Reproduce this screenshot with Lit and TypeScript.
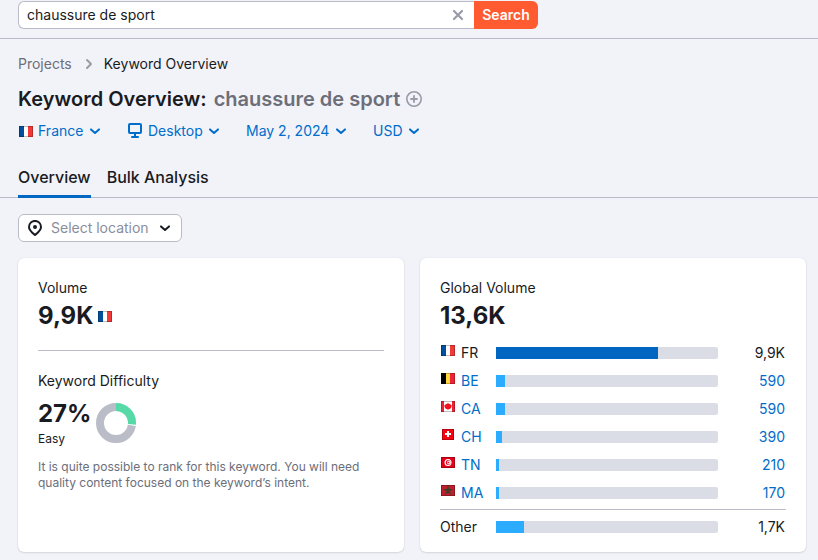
import { LitElement, html, svg, css } from "lit";
import { customElement, property } from "lit/decorators.js";
import { classMap } from "lit/directives/class-map.js";
import { styleMap } from "lit/directives/style-map.js";

interface Row {
  code: string;
  volume: string;
  share: number;
  current?: boolean;
}

const ROWS: Row[] = [
  { code: "FR", volume: "9,9K", share: 73, current: true },
  { code: "BE", volume: "590", share: 4 },
  { code: "CA", volume: "590", share: 4 },
  { code: "CH", volume: "390", share: 2.7 },
  { code: "TN", volume: "210", share: 1.4 },
  { code: "MA", volume: "170", share: 1.4 },
];

const stripes = (a: string, b: string, c: string) => svg`
  <rect width="5" height="11" fill=${a} /><rect x="5" width="4" height="11" fill=${b} />
  <rect x="9" width="5" height="11" fill=${c} />`;

const FLAGS: Record<string, unknown> = {
  FR: stripes("#00509d", "#ffffff", "#f13a37"),
  BE: stripes("#000000", "#ffd93f", "#ee2436"),
  CA: svg`<rect width="14" height="11" fill="#fff" /><rect width="3" height="11" fill="#ee2436" />
    <rect x="11" width="3" height="11" fill="#ee2436" />
    <path d="M7 1.800L8 3H9.500V4H10.500V6L9 8H7.500V9H6.500V8H5L3.500 6V4H4.500V3H6z" fill="#f5121c" />`,
  CH: svg`<rect x="1" width="12" height="11" fill="#f70212" />
    <path d="M6 2h2v2h2v2H8v2H6V6H4V4h2z" fill="#fff" />`,
  TN: svg`<rect width="14" height="11" fill="#e2001a" /><circle cx="7" cy="5.500" r="3.500" fill="#fff" />
    <circle cx="7.300" cy="5.500" r="2.500" fill="#e2001a" /><circle cx="8" cy="5.500" r="1.900" fill="#fff" />
    <path d="M6.200 5.500l2.600-.9-1.600 2.200V4.200l1.600 2.200z" fill="#e2001a" />`,
  MA: svg`<rect width="14" height="11" fill="#bd1f2c" />
    <path d="M7 2.300L8.900 8.100 4 4.500h6L5.100 8.100z" fill="none" stroke="#39402a" stroke-width="1.200" />`,
};

@customElement("country-flag")
class CountryFlag extends LitElement {
  @property() code = "FR";
  static styles = css`
    :host { display: inline-flex; flex: none; }
  `;
  render() {
    const square = this.code === "CH";
    return html`<svg width="14" height="11" viewBox="0 0 14 11" aria-hidden="true">
      ${FLAGS[this.code]}
      <rect x=${square ? 1.5 : 0.5} y="0.5" width=${square ? 11 : 13} height="10" fill="none" stroke="#000" stroke-opacity=".25" />
    </svg>`;
  }
}

const chevron = html`<svg class="chevron" width="16" height="16" viewBox="0 0 16 16" aria-hidden="true">
  <path d="M4 6.400L8 10l4-3.600" fill="none" stroke="currentColor" stroke-width="2" stroke-linecap="round" stroke-linejoin="round" />
</svg>`;

@customElement("volume-bar")
class VolumeBar extends LitElement {
  @property({ type: Number }) share = 0;
  @property({ type: Boolean }) strong = false;
  static styles = css`
    :host { display: block; }
    .track { height: 12px; border-radius: 0 2px 2px 0; background: #dadde6; overflow: hidden; }
    .fill { height: 100%; background: #2bacff; }
    .strong { background: #0066c1; }
  `;
  render() {
    return html`<div class="track">
      <div class=${classMap({ fill: true, strong: this.strong })} style=${styleMap({ width: `${this.share}%` })}></div>
    </div>`;
  }
}

@customElement("app-root")
class AppRoot extends LitElement {
  static styles = css`
    :host {
      display: block;
      min-height: 100vh;
      box-sizing: border-box;
      background: #f2f3f8;
      color: #191b23;
      font: 14px/20px Inter, "Liberation Sans", sans-serif;
    }
    * { box-sizing: border-box; }
    a { color: #006dca; text-decoration: none; }
    button, input, select { font: inherit; margin: 0; }
    h1, h2, p { margin: 0; }

    .topbar { padding: 1px 18px 9px; border-bottom: 1px solid #b9bcc8; }
    .search { display: flex; max-width: 520px; height: 28px; }
    .field {
      flex: 1; display: flex; align-items: center; background: #fff;
      border: 1px solid #b9bcc8; border-right: 0; border-radius: 6px 0 0 6px; padding: 0 8px;
    }
    .query { flex: 1; min-width: 0; border: 0; padding: 0; background: none; color: inherit; outline: none; }
    .clear { display: flex; border: 0; padding: 0; background: none; color: #989ba8; }
    .go { width: 64px; border: 0; padding: 0; border-radius: 0 6px 6px 0; background: #ff5a30; color: #fff; font-weight: 600; }

    .crumbs { display: flex; align-items: center; gap: 8px; padding: 15px 18px 0; }
    .crumbs a { color: #6c6e79; }
    .crumbs svg { color: #989ba8; }

    .title { display: flex; align-items: center; gap: 7px; padding: 13px 18px 0; font-size: 20px; line-height: 24px; font-weight: 600; }
    .term { display: flex; align-items: center; gap: 6px; color: #6c6e79; }
    .add { display: flex; border: 0; padding: 0; background: none; color: #989ba8; }

    .filters { display: flex; gap: 24px; padding: 10px 18px 0; }
    .pick { position: relative; display: inline-flex; align-items: center; gap: 5px; color: #006dca; }
    .pick select {
      appearance: none; border: 0; padding: 0 19px 0 0; background: none; color: inherit; outline: none; height: 20px;
    }
    .pick .chevron { position: absolute; right: 0; pointer-events: none; }
    .pick country-flag { padding-left: 1px; }

    .tabs { display: flex; gap: 16px; padding: 24px 18px 0; border-bottom: 1px solid #b9bcc8; }
    .tab {
      border: 0; background: none; color: inherit; padding: 0; height: 33px; margin-bottom: -1px;
      font-size: 16px; line-height: 24px; font-weight: 500; display: flex;
    }
    .active { border-bottom: 3px solid #0067c2; }

    .location {
      margin: 16px 18px; height: 28px; padding: 0 8px; gap: 8px; background: #fff;
      border: 1px solid #b9bcc8; border-radius: 6px; color: #191b23;
    }
    .location select { color: #8a8e9b; padding-right: 24px; }
    .location .chevron { right: 8px; }

    .cards { display: grid; grid-template-columns: 1fr 1fr; gap: 16px; padding: 0 12px 8px 18px; }
    .card { background: #fff; border-radius: 6px; padding: 20px 20px 9px; box-shadow: 0 0 1px rgba(25, 27, 35, .16), 0 1px 2px rgba(25, 27, 35, .12); }
    h2 { margin-bottom: 2px; font-size: 14px; line-height: 20px; font-weight: 400; }
    .big { display: flex; align-items: center; gap: 5px; font-size: 24px; line-height: 32px; font-weight: 700; }
    .split { border: 0; border-top: 1px solid #b9bcc8; margin: 18px 0 20px; }
    .score { display: flex; align-items: center; gap: 5px; margin-top: 6px; }
    .score .big { line-height: 34px; }
    .score svg { margin-top: 2px; }
    .level { font-size: 12px; line-height: 16px; }
    .hint { margin-top: 12px; font-size: 12px; line-height: 16px; color: #6c6e79; }

    table { width: 100%; margin-top: 7px; border-spacing: 0; table-layout: fixed; }
    td, th { height: 28px; padding: 0; font-weight: 400; text-align: left; vertical-align: middle; }
    .where { width: 56px; }
    .amount { width: 68px; text-align: right; padding-right: 1px; }
    .country { display: flex; gap: 6px; padding-left: 1px; }
    .country country-flag { padding-top: 2px; }
    tbody tr:last-child > * { height: 30px; padding-bottom: 2px; }
    tfoot td, tfoot th { height: 34px; border-top: 1px solid #b9bcc8; }
  `;

  private row(r: Row) {
    return html`<tr>
      <th class="where" scope="row">
        <span class="country"><country-flag code=${r.code}></country-flag>
        ${r.current ? html`<span>${r.code}</span>` : html`<a href="#${r.code}">${r.code}</a>`}</span>
      </th>
      <td><volume-bar .share=${r.share} ?strong=${r.current}></volume-bar></td>
      <td class="amount">${r.current ? r.volume : html`<a href="#${r.code}">${r.volume}</a>`}</td>
    </tr>`;
  }

  private pick(label: string, value: string, icon: unknown = "") {
    return html`<label class="pick">${icon}<select aria-label=${label}><option>${value}</option></select>${chevron}</label>`;
  }

  render() {
    return html`
      <header class="topbar">
        <form class="search" @submit=${(e: Event) => e.preventDefault()}>
          <div class="field">
            <input class="query" aria-label="Keyword" value="chaussure de sport" />
            <button class="clear" type="button" aria-label="Clear">
              <svg width="16" height="16" viewBox="0 0 16 16"><path d="M4 4l8 8M12 4l-8 8" stroke="currentColor" stroke-width="2.200" stroke-linecap="round" /></svg>
            </button>
          </div>
          <button class="go">Search</button>
        </form>
      </header>
      <main>
        <nav class="crumbs" aria-label="Breadcrumb">
          <a href="#projects">Projects</a>
          <svg width="16" height="16" viewBox="0 0 16 16" aria-hidden="true"><path d="M7 4l4 4-4 4" fill="none" stroke="currentColor" stroke-width="2" stroke-linecap="round" stroke-linejoin="round" /></svg>
          <span>Keyword Overview</span>
        </nav>
        <h1 class="title">
          <span>Keyword Overview:</span>
          <span class="term">chaussure de sport
            <button class="add" type="button" aria-label="Add to list">
              <svg width="16" height="16" viewBox="0 0 16 16"><circle cx="8" cy="8" r="7.200" fill="none" stroke="currentColor" stroke-width="1.600" /><path d="M8 5v6M5 8h6" stroke="currentColor" stroke-width="1.800" stroke-linecap="round" /></svg>
            </button>
          </span>
        </h1>
        <div class="filters">
          ${this.pick("Country", "France", html`<country-flag code="FR"></country-flag>`)}
          ${this.pick("Device", "Desktop", html`<svg width="16" height="16" viewBox="0 0 16 16" aria-hidden="true"><rect x="2" y="1" width="12" height="9" rx="1" fill="none" stroke="currentColor" stroke-width="2" /><path d="M8 11v3M5 14h6" stroke="currentColor" stroke-width="2" stroke-linecap="round" /></svg>`)}
          ${this.pick("Date", "May 2, 2024")}
          ${this.pick("Currency", "USD")}
        </div>
        <div class="tabs" role="tablist">
          <button class="tab active" role="tab" aria-selected="true">Overview</button>
          <button class="tab" role="tab" aria-selected="false">Bulk Analysis</button>
        </div>
        <label class="pick location">
          <svg width="16" height="16" viewBox="0 0 16 16" aria-hidden="true"><path d="M8 15C5.500 12.900 2 10.400 2 6.900a6 6 0 0 1 12 0C14 10.400 10.500 12.900 8 15z" fill="none" stroke="currentColor" stroke-width="2" stroke-linejoin="round" /><circle cx="8" cy="7" r="2" fill="currentColor" /></svg>
          <select aria-label="Location"><option>Select location</option></select>${chevron}
        </label>
        <div class="cards">
          <section class="card">
            <h2>Volume</h2>
            <div class="big">9,9K<country-flag code="FR"></country-flag></div>
            <hr class="split" />
            <h2>Keyword Difficulty</h2>
            <div class="score">
              <div>
                <div class="big">27%</div>
                <div class="level">Easy</div>
              </div>
              <svg width="40" height="40" viewBox="0 0 40 40" role="img" aria-label="Difficulty 27%">
                <g fill="none" stroke-width="8" transform="rotate(-90 20 20)">
                  <circle cx="20" cy="20" r="16" stroke="#babdc7" />
                  <circle cx="20" cy="20" r="16" stroke="#fff" pathLength="100" stroke-dasharray="27.500 72.500" />
                  <circle cx="20" cy="20" r="16" stroke="#55d9a6" pathLength="100" stroke-dasharray="26.500 73.500" />
                </g>
              </svg>
            </div>
            <p class="hint">It is quite possible to rank for this keyword. You will need quality content focused on the keyword’s intent.</p>
          </section>
          <section class="card">
            <h2>Global Volume</h2>
            <div class="big">13,6K</div>
            <table aria-label="Volume by country">
              <tbody>${ROWS.map((r) => this.row(r))}</tbody>
              <tfoot>
                <tr>
                  <th class="where" scope="row">Other</th>
                  <td><volume-bar .share=${12.6}></volume-bar></td>
                  <td class="amount">1,7K</td>
                </tr>
              </tfoot>
            </table>
          </section>
        </div>
      </main>
    `;
  }
}
